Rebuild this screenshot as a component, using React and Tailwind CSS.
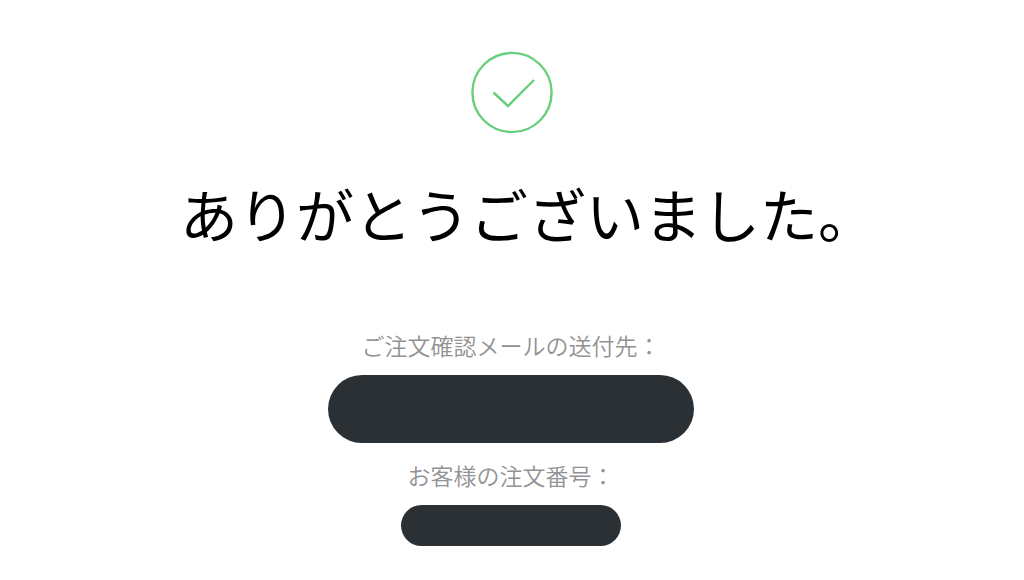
import React from "react";

function SuccessIcon() {
  return (
    <svg viewBox="0 0 84 84" className="size-21" fill="none" stroke="#68cf7d" strokeWidth="2.4" aria-hidden="true">
      <circle cx="42" cy="41.5" r="39.6" />
      <path d="M23.5 41.5 L38 55 L64 29" />
    </svg>
  );
}

export default function App() {
  return (
    <main
      lang="ja"
      className="flex min-h-screen flex-col items-center bg-white pt-[51px] font-['Noto_Sans_CJK_JP',sans-serif]"
    >
      <SuccessIcon />
      <h1 className="mt-[38px] pl-8 text-[58px] leading-[80px] font-normal text-black">
        ありがとうございました。
      </h1>
      <dl className="mt-[76px] flex flex-col items-center pr-0.5 text-[23px] leading-8 font-[350] text-[#929295]">
        <dt>ご注文確認メールの送付先：</dt>
        <dd className="mt-3.5 h-[68px] w-[366px] rounded-full bg-[#2b3035]" />
        <dt className="mt-4">お客様の注文番号：</dt>
        <dd className="mt-3.5 h-[41px] w-[220px] rounded-full bg-[#2b3035]" />
      </dl>
    </main>
  );
}
